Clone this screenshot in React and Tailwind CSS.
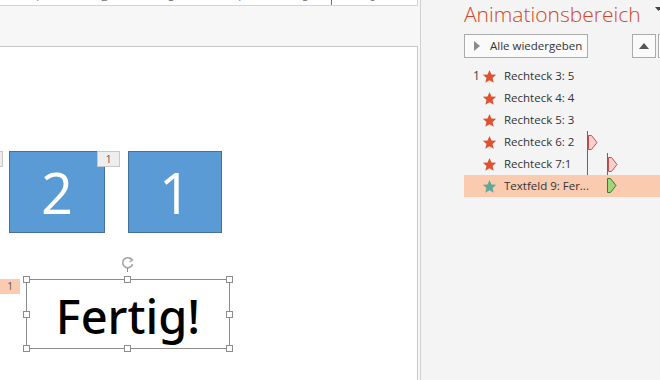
import React from "react";

const font = { fontFamily: "'Open Sans', 'Noto Sans', sans-serif" };

function Star({ color }) {
    return (
        <svg width="15" height="15" viewBox="0 0 24 24" className="shrink-0">
            <path
                d="M12 1.5l3.1 7.2 7.6.6-5.8 5 1.8 7.6L12 17.8l-6.7 4.1 1.8-7.6-5.8-5 7.6-.6z"
                fill={color}
            />
        </svg>
    );
}

function Flag({ fill, stroke }) {
    return (
        <svg width="10" height="15" viewBox="0 0 10 15" className="block">
            <path d="M0.5 0.5h3l5.5 7-5.5 7h-3z" fill={fill} stroke={stroke} strokeWidth="1" />
        </svg>
    );
}

function Handle() {
    return <div className="w-[7px] h-[7px] bg-white border border-[#8c8c8c]" />;
}

const rows = [
    { num: "1", name: "Rechteck 3: 5" },
    { num: "", name: "Rechteck 4: 4" },
    { num: "", name: "Rechteck 5: 3" },
    { num: "", name: "Rechteck 6: 2", bar: 1 },
    { num: "", name: "Rechteck 7:1", bar: 2 },
    { num: "", name: "Textfeld 9: Fer...", bar: 3, active: true },
];

export default function App() {
    return (
        <div className="w-[660px] h-[380px] flex bg-[#f7f7f7] overflow-hidden" style={font}>
            {/* editing area */}
            <div className="w-[418px] shrink-0 flex flex-col">
                <div className="h-[6px] bg-white border-b border-r border-[#d4d4d4] relative overflow-hidden">
                    <div className="flex -mt-[11px] pl-[4px] text-[11px] text-[#777]">
                        {["1", "2", "3", "4", "5", "6"].map((n) => (
                            <span key={n} className="w-[67px] text-center">{n}</span>
                        ))}
                    </div>
                    <div className="absolute left-[331px] top-0 h-[6px] border-l border-dashed border-[#c0504d]" />
                </div>
                <div className="h-[40px]" />
                <div className="flex-1 bg-white border-t border-r border-[#c6c6c6] relative">
                    {/* cut-off label */}
                    <div className="absolute left-0 top-[104px] w-[3px] h-[16px] bg-[#ececec] border border-l-0 border-[#c8c8c8]" />
                    {/* shape 2 */}
                    <div className="absolute left-[9px] top-[104px] w-[96px] h-[82px] bg-[#5b9bd5] border border-[#41719c] flex items-center justify-center text-white text-[56px] leading-none">
                        2
                    </div>
                    <div className="absolute left-[97px] top-[104px] w-[23px] h-[16px] bg-[#eeeeee] border border-[#c8c8c8] flex items-center justify-center text-[10px] text-[#555]">
                        1
                    </div>
                    {/* shape 1 */}
                    <div className="absolute left-[128px] top-[104px] w-[94px] h-[82px] bg-[#5b9bd5] border border-[#41719c] flex items-center justify-center text-white text-[56px] leading-none">
                        1
                    </div>
                    {/* order label */}
                    <div className="absolute left-0 top-[232px] w-[20px] h-[15px] bg-[#fbcbb0] flex items-center justify-center text-[10px] text-[#555]">
                        1
                    </div>
                    {/* rotation handle */}
                    <svg className="absolute left-[120px] top-[208px]" width="16" height="17" viewBox="0 0 16 17">
                        <path d="M11.5 4.5A5 5 0 1 0 12.5 9" fill="none" stroke="#a6a6a6" strokeWidth="1.6" />
                        <path d="M9.5 2.5l3 2.5-3 2" fill="none" stroke="#a6a6a6" strokeWidth="1.4" />
                        <line x1="7.5" y1="13" x2="7.5" y2="17" stroke="#8c8c8c" />
                    </svg>
                    {/* selected text box */}
                    <div className="absolute left-[26px] top-[232px] w-[204px] h-[70px] border border-[#8c8c8c] flex items-center justify-center">
                        <span className="text-[47px] text-black leading-none pt-[5px] font-medium font-['Noto_Sans',sans-serif]">Fertig!</span>
                        <div className="absolute -left-[4px] -top-[4px]"><Handle /></div>
                        <div className="absolute left-[97px] -top-[4px]"><Handle /></div>
                        <div className="absolute -right-[4px] -top-[4px]"><Handle /></div>
                        <div className="absolute -left-[4px] top-[31px]"><Handle /></div>
                        <div className="absolute -right-[4px] top-[31px]"><Handle /></div>
                        <div className="absolute -left-[4px] -bottom-[4px]"><Handle /></div>
                        <div className="absolute left-[97px] -bottom-[4px]"><Handle /></div>
                        <div className="absolute -right-[4px] -bottom-[4px]"><Handle /></div>
                    </div>
                </div>
            </div>

            {/* animation pane */}
            <div className="ml-[2px] w-[240px] shrink-0 border-l border-[#d0d0d0] bg-[#f4f4f4] pl-[43px] flex flex-col">
                <div className="h-[31px] flex items-start justify-between pt-[1px]">
                    <span className="text-[21px] font-light text-[#d24726] leading-[26px] whitespace-nowrap">Animationsbereich</span>
                    <svg width="8" height="6" viewBox="0 0 8 6" className="mt-[6px] -mr-[3px] shrink-0">
                        <path d="M0 0h7l-3.5 4z" fill="#444" />
                    </svg>
                </div>
                <div className="flex items-center mt-[3px] h-[24px]">
                    <div className="w-[124px] h-[24px] shrink-0 border border-[#ababab] bg-[#fafafa] flex items-center pl-[9px] gap-[10px]">
                        <svg width="6" height="10" viewBox="0 0 6 10" className="shrink-0">
                            <path d="M0 0l6 5-6 5z" fill="#8a8a8a" />
                        </svg>
                        <span className="text-[11.5px] text-[#333] whitespace-nowrap">Alle wiedergeben</span>
                    </div>
                    <div className="ml-[44px] w-[24px] h-[24px] shrink-0 border border-[#ababab] bg-[#fafafa] flex items-center justify-center">
                        <svg width="10" height="6" viewBox="0 0 10 6">
                            <path d="M0 6l5-6 5 6z" fill="#555" />
                        </svg>
                    </div>
                    <div className="ml-[2px] w-[10px] h-[24px] shrink-0 border border-[#ababab] bg-[#fafafa]" />
                </div>
                <div className="mt-[7px] flex flex-col">
                    {rows.map((r, i) => (
                        <div
                            key={i}
                            className={
                                "h-[22px] flex items-center relative " +
                                (r.active ? "bg-[#fbcbb0]" : "")
                            }
                        >
                            <span className="w-[18px] pl-[9px] text-[12px] text-[#444]">{r.num}</span>
                            <Star color={r.active ? "#5fa896" : "#e0522f"} />
                            <span className="ml-[7px] text-[11.5px] text-[#333] whitespace-nowrap">{r.name}</span>
                            {r.bar === 1 && (
                                <div className="absolute left-[123px] top-0 h-[44px] border-l border-[#666]">
                                    <div className="mt-[4px]"><Flag fill="#fbd0d0" stroke="#c0504d" /></div>
                                </div>
                            )}
                            {r.bar === 2 && (
                                <div className="absolute left-[143px] top-0 h-[22px] border-l border-[#666]">
                                    <div className="mt-[4px]"><Flag fill="#fbd0d0" stroke="#c0504d" /></div>
                                </div>
                            )}
                            {r.bar === 3 && (
                                <div className="absolute left-[143px] top-[3px]">
                                    <Flag fill="#9ed77a" stroke="#3d7a2a" />
                                </div>
                            )}
                        </div>
                    ))}
                </div>
            </div>
        </div>
    );
}
